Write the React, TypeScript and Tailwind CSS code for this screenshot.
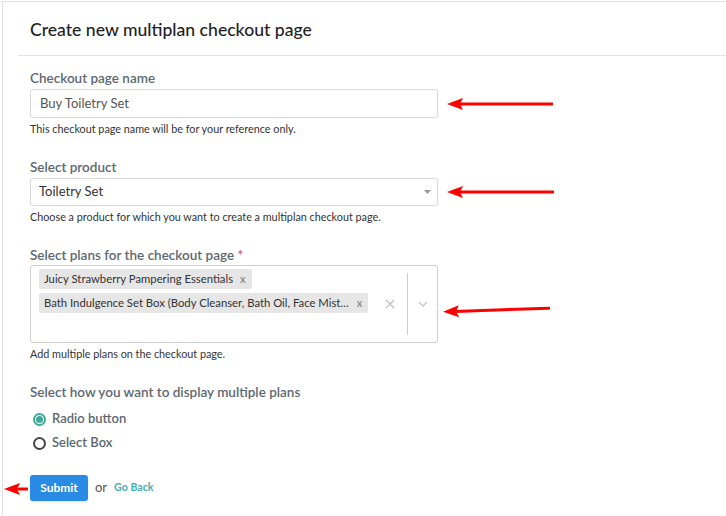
import React from "react";

const font = { fontFamily: "Lato, 'Open Sans', sans-serif" };

function Arrow({ w, className }: { w: number; className?: string }) {
  return (
    <svg width={w} height="14" viewBox={`0 0 ${w} 14`} className={className}>
      <line x1="12" y1="7" x2={w - 1} y2="7" stroke="#ff0000" strokeWidth="3" strokeLinecap="round" />
      <polygon points="0,7 16,1 13,7 16,13" fill="#ff0000" />
    </svg>
  );
}

export default function App() {
  return (
    <div className="w-[726px] h-[516px] bg-white overflow-hidden pt-[1px] pl-[2px]" style={font}>
      <div className="border-t border-l border-[#e2e2e2] h-[520px] pl-[15px]">
        <div className="border-b border-[#e2e2e2] pl-3 pt-[16px] pb-[13px]">
          <h1 className="text-[17.6px] leading-[24px] font-medium text-[#1e1e1e]">Create new multiplan checkout page</h1>
        </div>
        <div className="pl-3 pt-[13px]">
          {/* Field 1 */}
          <div className="flex flex-col">
            <label className="text-[13.5px] leading-[18px] font-semibold text-[#5d6870] mb-[2px]">Checkout page name</label>
            <div className="flex items-center">
              <div className="w-[408px] h-[29px] border border-[#d8d8d8] rounded-[3px] flex items-center pl-[9px] text-[13px] text-[#555]">Buy Toiletry Set</div>
              <Arrow w={106} className="ml-[9px]" />
            </div>
            <p className="text-[10.8px] leading-[16px] text-[#333] mt-[3px]">This checkout page name will be for your reference only.</p>
          </div>
          {/* Field 2 */}
          <div className="flex flex-col mt-[21px]">
            <label className="text-[13.5px] leading-[18px] font-semibold text-[#5d6870] mb-[2px]">Select product</label>
            <div className="flex items-center">
              <div className="w-[408px] h-[28px] border border-[#d8d8d8] rounded-[3px] flex items-center justify-between pl-[8px] pr-[6px] text-[13px] text-[#333]">
                <span>Toiletry Set</span>
                <svg width="7" height="4" viewBox="0 0 7 4"><polygon points="0,0 7,0 3.5,4" fill="#999" /></svg>
              </div>
              <Arrow w={107} className="ml-[9px]" />
            </div>
            <p className="text-[10.8px] leading-[16px] text-[#333] mt-[3px]">Choose a product for which you want to create a multiplan checkout page.</p>
          </div>
          {/* Field 3 */}
          <div className="flex flex-col mt-[21px]">
            <label className="text-[13.5px] leading-[18px] font-semibold text-[#5d6870] mb-[1px]">
              Select plans for the checkout page <span className="text-[#d9534f]">*</span>
            </label>
            <div className="flex items-start">
              <div className="w-[408px] h-[78px] border border-[#d0d0d0] rounded-[3px] flex">
                <div className="flex-1 flex flex-col items-start gap-[4px] pl-[8px] pt-[3px]">
                  <span className="bg-[#e6e6e6] rounded-[2px] h-[20px] flex items-center pl-[5px] pr-[6px] text-[11.3px] text-[#333]">
                    Juicy Strawberry Pampering Essentials<span className="ml-[7px] text-[#777] text-[11px]">x</span>
                  </span>
                  <span className="bg-[#e6e6e6] rounded-[2px] h-[20px] flex items-center pl-[5px] pr-[6px] text-[11.3px] text-[#333]">
                    Bath Indulgence Set Box (Body Cleanser, Bath Oil, Face Mist…<span className="ml-[8px] text-[#777] text-[11px]">x</span>
                  </span>
                </div>
                <div className="flex items-center pr-[12px] pl-[6px]">
                  <svg width="10" height="10" viewBox="0 0 10 10"><path d="M1 1L9 9M9 1L1 9" stroke="#c6c6c6" strokeWidth="1.6" /></svg>
                </div>
                <div className="w-px bg-[#cfcfcf] my-[7px]" />
                <div className="flex items-center justify-center w-[29px]">
                  <svg width="10" height="6" viewBox="0 0 10 6"><path d="M1 1L5 5L9 1" fill="none" stroke="#c6c6c6" strokeWidth="1.3" /></svg>
                </div>
              </div>
              <Arrow w={107} className="ml-[5px] mt-[38px] -rotate-2" />
            </div>
            <p className="text-[10.8px] leading-[16px] text-[#333] mt-[3px]">Add multiple plans on the checkout page.</p>
          </div>
          {/* Field 4 */}
          <div className="flex flex-col mt-[21px]">
            <label className="text-[13.5px] leading-[18px] font-semibold text-[#5d6870]">Select how you want to display multiple plans</label>
            <div className="mt-[6px] flex flex-col">
              <div className="h-[24px] flex items-center text-[13px] text-[#5d6870] font-semibold">
                <span className="w-[13px] h-[13px] rounded-full border-[2px] border-[#41a99a] flex items-center justify-center ml-[3px] mr-[6px]">
                  <span className="w-[7px] h-[7px] rounded-full bg-[#41a99a]" />
                </span>
                Radio button
              </div>
              <div className="h-[24px] flex items-center text-[13px] text-[#5d6870] font-semibold">
                <span className="w-[13px] h-[13px] rounded-full border-[2px] border-[#444] ml-[3px] mr-[6px]" />
                Select Box
              </div>
            </div>
          </div>
          {/* Buttons */}
          <div className="flex items-center mt-[20px] relative">
            <Arrow w={24} className="absolute left-[-26px] top-[7px]" />
            <button className="h-[26px] w-[58px] rounded-[3px] bg-[#2a8be5] text-white text-[12px] font-bold shadow-sm">Submit</button>
            <span className="ml-[7px] text-[13px] text-[#555]">or</span>
            <a className="ml-[7px] text-[10.6px] font-bold text-[#3fb0b8]">Go Back</a>
          </div>
        </div>
      </div>
    </div>
  );
}
